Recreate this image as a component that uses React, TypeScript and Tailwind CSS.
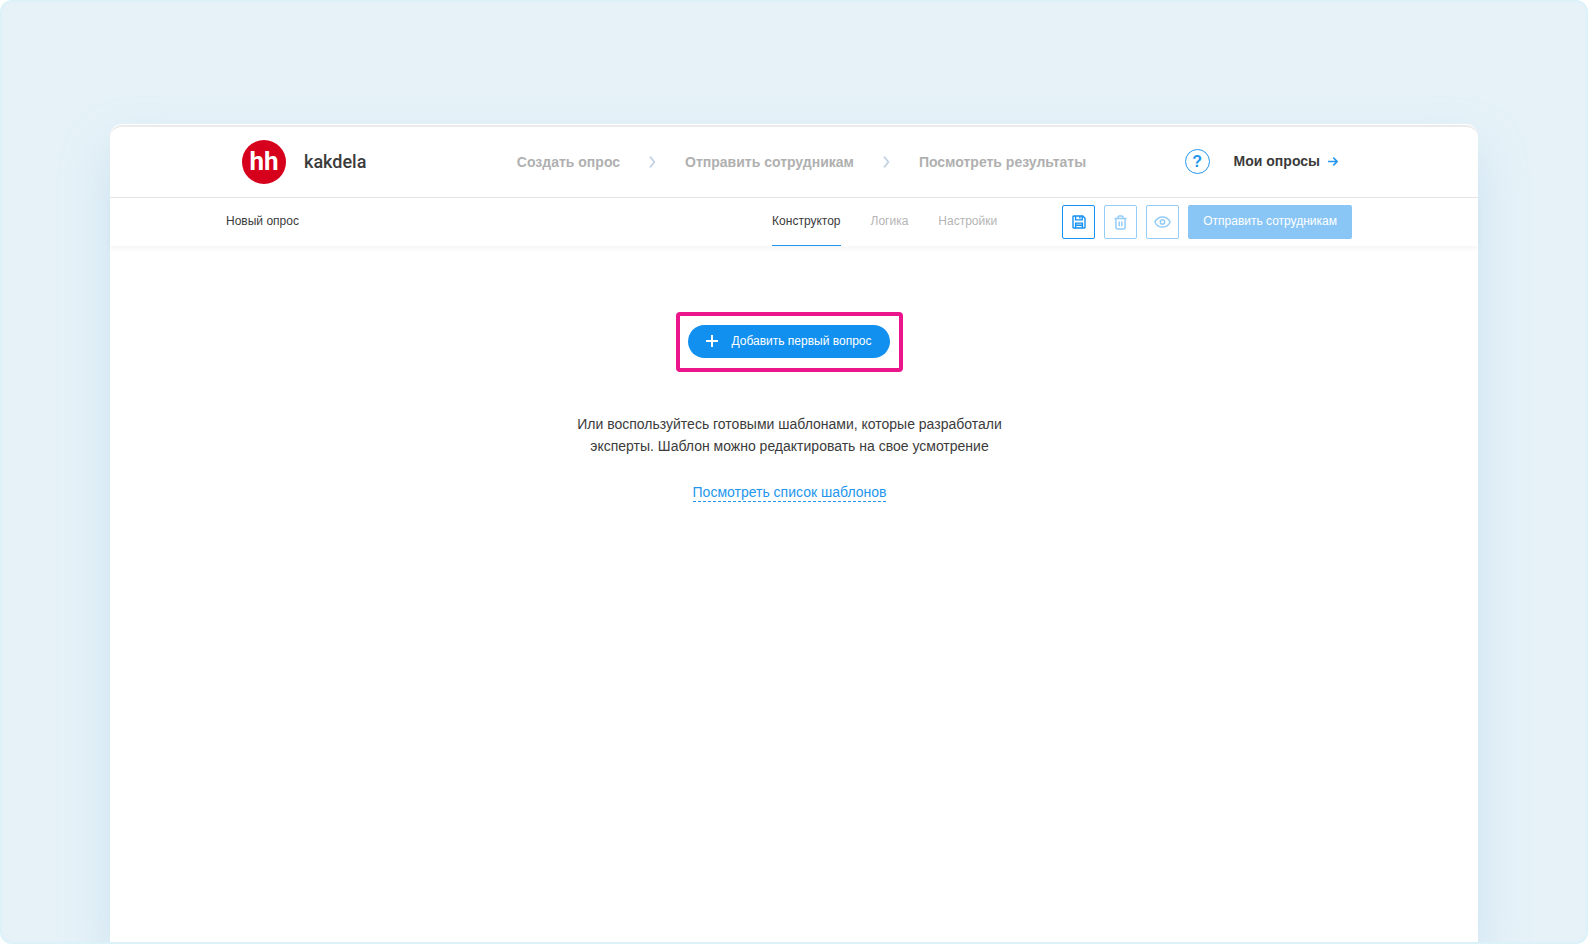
import React from "react";

const steps = ["Создать опрос", "Отправить сотрудникам", "Посмотреть результаты"];

const tabs = [
  { label: "Конструктор", active: true },
  { label: "Логика", active: false },
  { label: "Настройки", active: false },
];

function Chevron() {
  return (
    <svg className="h-3 w-[7px] shrink-0" viewBox="0 0 7 12" fill="none" stroke="#c3d3e2" strokeWidth="1.8" aria-hidden="true">
      <path d="M1 .6 5.4 6 1 11.4" />
    </svg>
  );
}

function SaveIcon() {
  return (
    <svg className="size-[14px]" viewBox="0 0 14 14" fill="none" stroke="currentColor" strokeWidth="1.4" aria-hidden="true">
      <path d="M1.700 1h9.100L13 3.200v9.100a.7.7 0 0 1-.7.7H1.700a.7.7 0 0 1-.7-.7V1.700a.7.7 0 0 1 .7-.7Z" />
      <path d="M3.600 1v3.900h6.600V1M7.900 1v2.400M3.600 13V8.100h6.800V13M3.600 10.300h6.800" />
    </svg>
  );
}

function TrashIcon() {
  return (
    <svg className="h-[15px] w-[13px]" viewBox="0 0 13 15" fill="none" stroke="currentColor" strokeWidth="1.5" aria-hidden="true">
      <path d="M.5 3.6h12M4.1 3.4V2.2A1.1 1.1 0 0 1 5.2 1h2.6a1.1 1.1 0 0 1 1.1 1.2v1.2M1.9 3.8v8.8A1.5 1.5 0 0 0 3.4 14h6.2a1.5 1.5 0 0 0 1.5-1.4V3.8M5.2 6.6v4.6M7.8 6.6v4.6" />
    </svg>
  );
}

function EyeIcon() {
  return (
    <svg className="h-3 w-[17px]" viewBox="0 0 17 12" fill="none" stroke="currentColor" strokeWidth="1.5" aria-hidden="true">
      <path d="M.8 6C2.4 2.8 5.2.9 8.5.9S14.6 2.8 16.2 6c-1.6 3.2-4.4 5.1-7.7 5.1S2.4 9.2.8 6Z" />
      <circle cx="8.5" cy="6" r="2.2" />
    </svg>
  );
}

const iconButton = "flex h-[34px] w-[33px] items-center justify-center rounded-[2px] border bg-white";

export default function App() {
  return (
    <div className="bg-white font-['Liberation_Sans',Arial,sans-serif] text-[#3b3b3b]">
      <div className="flex min-h-screen flex-col overflow-hidden rounded-xl border-2 border-[#dbf2f9] bg-[#e6f2f8] px-[108px] pt-[122px]">
        <div className="flex grow flex-col rounded-t-xl bg-white pt-px shadow-[0_24px_48px_rgba(165,205,230,0.4)]">
          <header className="rounded-t-xl border-t-2 border-b border-t-[#ebebeb] border-b-[#e2e4e6]">
            <div className="flex h-[70px] items-center justify-between pr-[140px] pb-px pl-[132px]">
              <a href="#home" className="flex items-center gap-[18px]">
                <span className="flex size-11 items-center justify-center rounded-full bg-[#d6001c] pb-px font-[Roboto,sans-serif] text-[26px] leading-none font-bold text-white">
                  hh
                </span>
                <span className="font-[Roboto,sans-serif] text-lg font-medium">kakdela</span>
              </a>
              <nav className="ml-[52px] flex items-center text-sm font-bold text-[#b0b0b0]" aria-label="Этапы">
                {steps.map((step, i) => (
                  <React.Fragment key={step}>
                    {i > 0 && (
                      <span className="px-[29px]">
                        <Chevron />
                      </span>
                    )}
                    <a href="#step">{step}</a>
                  </React.Fragment>
                ))}
              </nav>
              <div className="flex items-center gap-6">
                <button type="button" aria-label="Помощь" className="flex size-[25px] items-center justify-center rounded-full border border-[#2496ed] text-base font-bold text-[#2496ed]">
                  ?
                </button>
                <a href="#surveys" className="flex items-center gap-2 pb-px text-sm font-bold">
                  Мои опросы
                  <svg className="h-[9px] w-[10px]" viewBox="0 0 10 9" fill="none" stroke="#2496ed" strokeWidth="1.6" aria-hidden="true">
                    <path d="M0 4.5h9M5.3.6 9.2 4.5 5.3 8.4" />
                  </svg>
                </a>
              </div>
            </div>
          </header>

          <div className="flex h-12 items-stretch justify-between pr-[126px] pl-[116px] text-xs shadow-[0_3px_4px_rgba(0,0,0,0.04)]">
            <h1 className="flex items-center pb-0.5">Новый опрос</h1>
            <div className="flex items-center gap-[65px]">
              <nav className="flex gap-[30px] self-stretch" aria-label="Разделы">
                {tabs.map((tab) => (
                  <a
                    key={tab.label}
                    href="#tab"
                    className={
                      tab.active
                        ? "flex items-center border-b border-[#2496ed] pb-px"
                        : "flex items-center border-b border-transparent pb-px text-[#b5b5b5]"
                    }
                  >
                    {tab.label}
                  </a>
                ))}
              </nav>
              <div className="flex gap-[9px]">
                <button type="button" aria-label="Сохранить" className={`${iconButton} border-[#1490f0] text-[#1490f0]`}>
                  <SaveIcon />
                </button>
                <button type="button" aria-label="Удалить" className={`${iconButton} border-[#94ccf8] text-[#94ccf8]`}>
                  <TrashIcon />
                </button>
                <button type="button" aria-label="Просмотр" className={`${iconButton} border-[#94ccf8] text-[#94ccf8]`}>
                  <EyeIcon />
                </button>
                <button type="button" className="h-[34px] rounded-[2px] bg-[#89c6f6] px-[15px] pb-0.5 text-white">
                  Отправить сотрудникам
                </button>
              </div>
            </div>
          </div>

          <main className="flex flex-col items-center pt-[66px] pr-[9px] text-center text-sm">
            <div className="rounded-[4px] border-4 border-[#eb168c] pt-[9px] pr-[9px] pb-[10px] pl-2">
              <button type="button" className="flex h-[33px] items-center gap-[13px] rounded-full bg-[#1190f0] px-[18px] pb-px text-xs text-white">
                <svg className="size-3" viewBox="0 0 12 12" stroke="currentColor" strokeWidth="2" aria-hidden="true">
                  <path d="M6 0v12M0 6h12" />
                </svg>
                Добавить первый вопрос
              </button>
            </div>
            <p className="mt-[41px] max-w-[450px] leading-[22px]">
              Или воспользуйтесь готовыми шаблонами, которые разработали эксперты. Шаблон можно редактировать на свое усмотрение
            </p>
            <a href="#templates" className="mt-[27px] border-b border-dashed border-[#2496ed] leading-[17px] text-[#2496ed]">
              Посмотреть список шаблонов
            </a>
          </main>
        </div>
      </div>
    </div>
  );
}
